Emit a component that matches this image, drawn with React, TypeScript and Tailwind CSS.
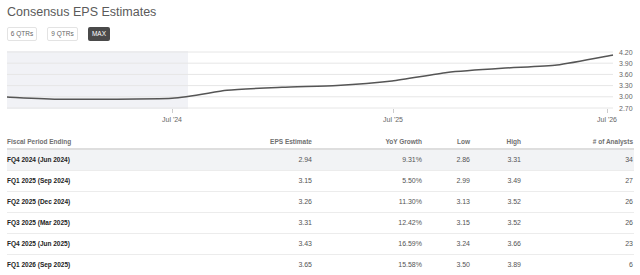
import React from "react";

const pts: [number, number][] = [
  [7, 97], [62, 99.3], [172, 98.3], [227, 90.3], [282, 87.3],
  [337, 85.5], [392, 81], [447, 72.5], [502, 68.3], [557, 65], [613, 55],
];

function smoothPath(p: [number, number][]) {
  let d = `M${p[0][0]},${p[0][1]}`;
  const t = 0.1;
  for (let i = 0; i < p.length - 1; i++) {
    const p0 = p[i - 1] || p[i];
    const p1 = p[i];
    const p2 = p[i + 1];
    const p3 = p[i + 2] || p2;
    const c1x = p1[0] + (p2[0] - p0[0]) * t;
    const c1y = p1[1] + (p2[1] - p0[1]) * t;
    const c2x = p2[0] - (p3[0] - p1[0]) * t;
    const c2y = p2[1] - (p3[1] - p1[1]) * t;
    d += ` C${c1x.toFixed(1)},${c1y.toFixed(1)} ${c2x.toFixed(1)},${c2y.toFixed(1)} ${p2[0]},${p2[1]}`;
  }
  return d;
}

const rows = [
  ["FQ4 2024 (Jun 2024)", "2.94", "9.31%", "2.86", "3.31", "34"],
  ["FQ1 2025 (Sep 2024)", "3.15", "5.50%", "2.99", "3.49", "27"],
  ["FQ2 2025 (Dec 2024)", "3.26", "11.30%", "3.13", "3.52", "26"],
  ["FQ3 2025 (Mar 2025)", "3.31", "12.42%", "3.15", "3.52", "26"],
  ["FQ4 2025 (Jun 2025)", "3.43", "16.59%", "3.24", "3.66", "23"],
  ["FQ1 2026 (Sep 2025)", "3.65", "15.58%", "3.50", "3.89", "6"],
];

const yLabels = ["4.20", "3.90", "3.60", "3.30", "3.00", "2.70"];

export default function App() {
  return (
    <div
      className="w-[640px] h-[275px] bg-white overflow-hidden"
      style={{ fontFamily: '"Liberation Sans", Arial, sans-serif' }}
    >
      <div className="pt-[5px] pl-[7px] text-[12.5px] leading-[15px] text-[#5a5a5a]">
        Consensus EPS Estimates
      </div>
      <div className="flex gap-[10px] pl-[7px] mt-[7px]">
        <div className="w-[30px] h-[14px] border border-[#e3e3e3] rounded-[2px] flex items-center justify-center text-[6.5px] text-[#666]">
          6 QTRs
        </div>
        <div className="w-[31px] h-[14px] border border-[#e3e3e3] rounded-[2px] flex items-center justify-center text-[6.5px] text-[#666]">
          9 QTRs
        </div>
        <div className="w-[22px] h-[14px] bg-[#4a4a4a] rounded-[2px] flex items-center justify-center text-[6.5px] text-white">
          MAX
        </div>
      </div>
      <svg width="640" height="84" viewBox="0 44 640 84" className="block mt-[3px]">
        <rect x="7" y="51" width="181" height="58" fill="#f1f2f6" />
        {[0, 1, 2, 3, 4, 5].map((i) => (
          <line key={i} x1="7" x2="613" y1={52 + i * 11.2} y2={52 + i * 11.2} stroke="#e6e6e6" strokeWidth="1" />
        ))}
        {[172, 393, 607].map((x) => (
          <line key={x} x1={x + 0.5} x2={x + 0.5} y1="109" y2="113" stroke="#cccccc" strokeWidth="1" />
        ))}
        <path d={smoothPath(pts)} fill="none" stroke="#555" strokeWidth="1.5" strokeLinejoin="round" />
        {yLabels.map((l, i) => (
          <text key={l} x="619" y={52 + i * 11.2 + 2.5} fontSize="7" fill="#666">
            {l}
          </text>
        ))}
        {[
          [172, "Jul '24"],
          [393, "Jul '25"],
          [607, "Jul '26"],
        ].map(([x, l]) => (
          <text key={l as string} x={x as number} y="121.5" fontSize="7" fill="#666" textAnchor="middle">
            {l}
          </text>
        ))}
      </svg>
      <div className="mt-[8px] mx-[7px] w-[627px]">
        <div className="flex h-[14px] items-center border-b-2 border-[#dedede] text-[6.5px] font-bold text-[#707070]">
          <div className="w-[205px]">Fiscal Period Ending</div>
          <div className="w-[100px] text-right">EPS Estimate</div>
          <div className="w-[110px] text-right">YoY Growth</div>
          <div className="w-[48px] text-right">Low</div>
          <div className="w-[51px] text-right">High</div>
          <div className="w-[112px] text-right">&#35; of Analysts</div>
        </div>
        {rows.map((r, i) => (
          <div
            key={r[0]}
            className={`flex h-[21px] items-center border-b border-[#ececec] ${i === 0 ? "bg-[#f2f3f5]" : ""}`}
          >
            <div className="w-[205px] text-[6.5px] font-bold text-[#222]">{r[0]}</div>
            <div className="w-[100px] text-right text-[7px] text-[#555]">{r[1]}</div>
            <div className="w-[110px] text-right text-[7px] text-[#555]">{r[2]}</div>
            <div className="w-[48px] text-right text-[7px] text-[#555]">{r[3]}</div>
            <div className="w-[51px] text-right text-[7px] text-[#555]">{r[4]}</div>
            <div className="w-[112px] text-right text-[7px] text-[#555]">{r[5]}</div>
          </div>
        ))}
      </div>
    </div>
  );
}
